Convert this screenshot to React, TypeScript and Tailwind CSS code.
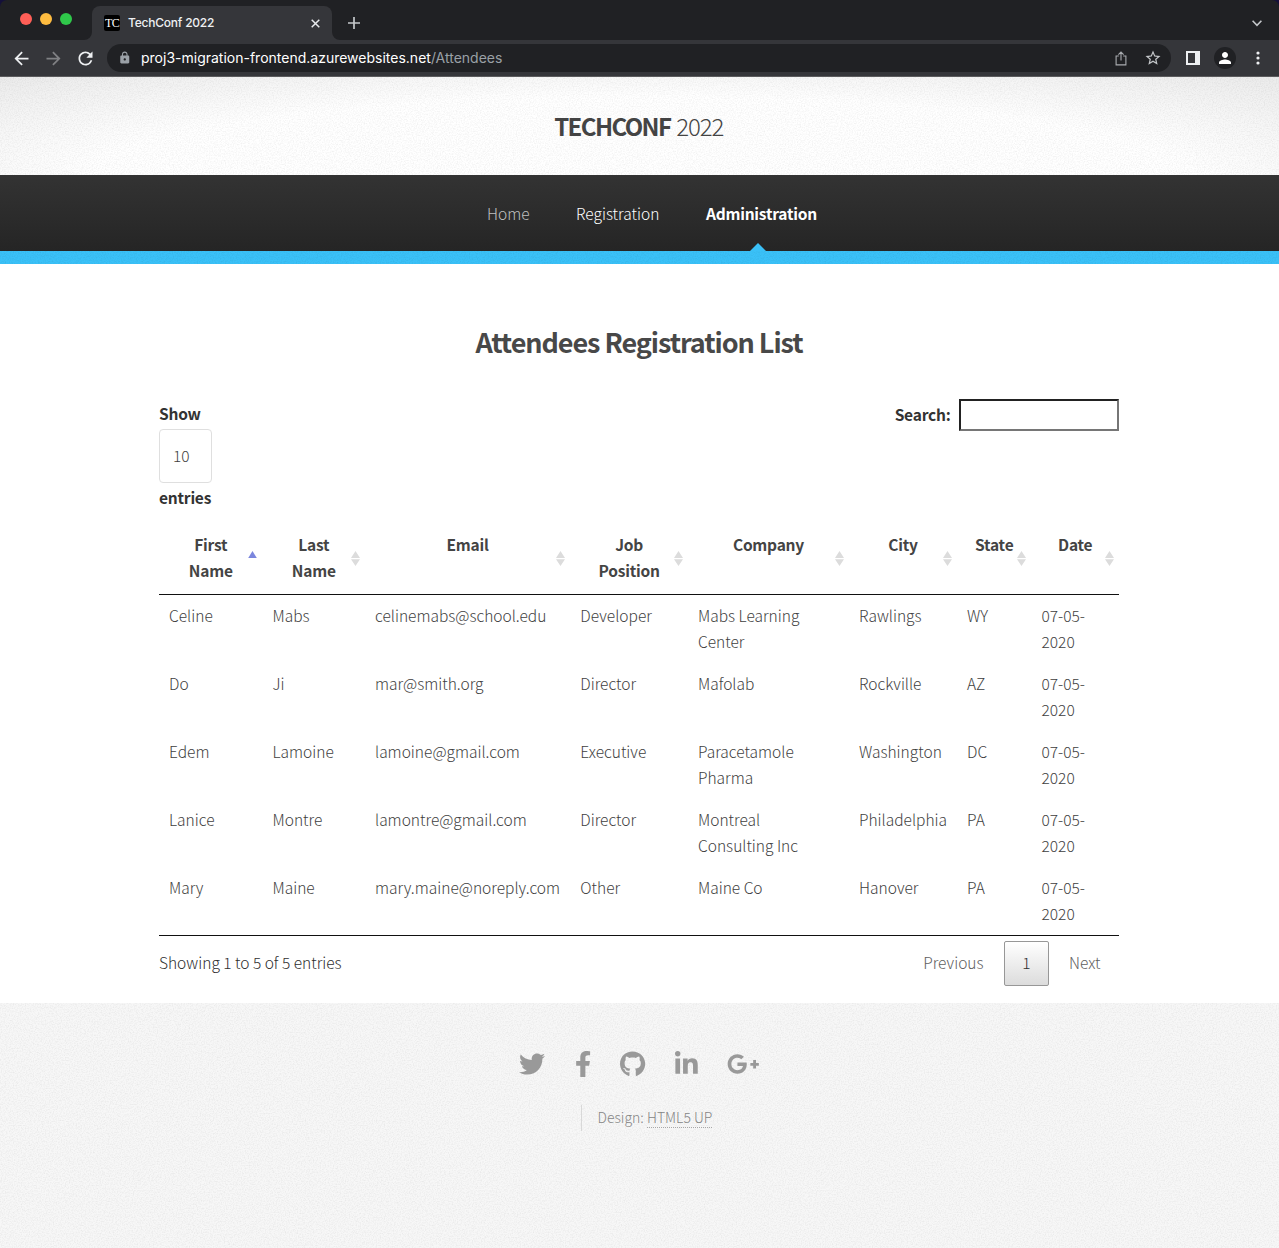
import type { ReactNode } from 'react';
import { FaFacebookF, FaGithub, FaGooglePlusG, FaLinkedinIn, FaTwitter } from 'react-icons/fa';
import { MdArrowBack, MdArrowForward, MdLock, MdPerson, MdRefresh, MdStarBorder } from 'react-icons/md';

function Grain({ id }: { id: string }) {
  return (
    <svg className="pointer-events-none absolute inset-0 h-full w-full" aria-hidden="true">
      <filter id={id} x="0" y="0" width="100%" height="100%">
        <feTurbulence type="fractalNoise" baseFrequency="0.75" numOctaves={2} stitchTiles="stitch" />
        <feColorMatrix values="0 0 0 0 0  0 0 0 0 0  0 0 0 0 0  0.12 0 0 0 -0.047" />
      </filter>
      <rect width="100%" height="100%" filter={`url(#${id})`} />
    </svg>
  );
}

function BrowserBar() {
  return (
    <div className="h-[77px] bg-[#35363a] font-[Inter,sans-serif] font-normal">
      <div className="bg-[#14103a]">
        <div className="flex h-10 items-start rounded-t-[7px] bg-[#202124]">
          <div className="flex gap-2 pt-[13px] pl-5">
            <span className="size-3 rounded-full bg-[#ff5f57]" />
            <span className="size-3 rounded-full bg-[#febc40]" />
            <span className="size-3 rounded-full bg-[#2fc84a]" />
          </div>
          <div className="relative mt-1.5 ml-5 flex h-[34px] w-60 items-center rounded-t-lg bg-[#35363a] pr-3 pl-3">
            <svg className="absolute bottom-0 -left-2 size-2" viewBox="0 0 8 8">
              <path d="M8 0v8H0a8 8 0 0 0 8-8z" fill="#35363a" />
            </svg>
            <svg className="absolute -right-2 bottom-0 size-2" viewBox="0 0 8 8">
              <path d="M0 0v8h8a8 8 0 0 1-8-8z" fill="#35363a" />
            </svg>
            <span className="flex size-4 items-center justify-center rounded-[2px] bg-black font-['Liberation_Serif',serif] text-[12px] leading-none tracking-[-0.6px] text-white">
              TC
            </span>
            <span className="ml-2 flex-1 text-[12px] leading-4 font-medium tracking-[-0.22px] text-[#eef0f2]">TechConf 2022</span>
            <svg className="size-[9px]" viewBox="0 0 9 9" fill="none" stroke="#e8eaed" strokeWidth="1.5">
              <path d="M.7.7l7.6 7.6M8.3.7L.7 8.3" />
            </svg>
          </div>
          <svg className="mt-[17px] ml-4 size-3" viewBox="0 0 12 12" fill="none" stroke="#c4c7ca" strokeWidth="1.7">
            <path d="M6 0v12M0 6h12" />
          </svg>
          <svg className="mt-[20px] mr-[17px] ml-auto h-[7px] w-[10px]" viewBox="0 0 10 7" fill="none" stroke="#c4c7ca" strokeWidth="1.6">
            <path d="M.6.8L5 5.4 9.4.8" />
          </svg>
        </div>
      </div>
      <div className="flex h-[37px] items-center border-b border-[#5b5b5d]">
        <div className="flex w-[107px] gap-[11px] pl-[10.5px]">
          <MdArrowBack className="size-[21px] text-[#eef0f2]" />
          <MdArrowForward className="size-[21px] text-[#808184]" />
          <MdRefresh className="size-[21px] text-[#eef0f2]" />
        </div>
        <div className="flex h-7 w-[1064px] items-center rounded-full bg-[#202124] pr-[9px] pl-[11px]">
          <MdLock className="size-[13.5px] text-[#9aa0a6]" />
          <span className="ml-[9.5px] flex-1 text-[14px] leading-5 text-[#9aa0a6]">
            <span className="text-white">proj3-migration-frontend.azurewebsites.net</span>/Attendees
          </span>
          <svg className="mr-[17px] h-[15px] w-[12px]" viewBox="0 0 12 15" fill="none" stroke="#a9acb0" strokeWidth="1.1">
            <path d="M3.8 5H1.1v8.9h9.8V5H8.2M6 9.6V1.2M3.4 3.7L6 1.1l2.6 2.6" />
          </svg>
          <MdStarBorder className="size-[18px] text-[#c4c7ca]" />
        </div>
        <svg className="ml-[15px] size-[14px]" viewBox="0 0 14 14" fill="#eef0f2">
          <path fillRule="evenodd" d="M0 0h14v14H0zM2 2v10h7V2z" />
        </svg>
        <span className="ml-[14px] flex size-[22px] items-center justify-center rounded-full bg-[#202124]">
          <MdPerson className="size-[18px] text-white" />
        </span>
        <svg className="ml-[19.5px] h-[14px] w-1" viewBox="0 0 4 14" fill="#eef0f2">
          <circle cx="2" cy="2" r="1.6" />
          <circle cx="2" cy="7" r="1.6" />
          <circle cx="2" cy="12" r="1.6" />
        </svg>
      </div>
    </div>
  );
}

function SortIcon({ active }: { active?: boolean }) {
  return (
    <svg className="absolute top-[27px] right-0 h-[19px] w-[19px]" viewBox="0 0 19 19">
      {active ? (
        <path d="M4.2 9h8.6L8.5 2z" fill="#7b86dd" />
      ) : (
        <path d="M5 9h9L9.5 2zM5 10.3h9l-4.5 6.6z" fill="#dcdcdc" />
      )}
    </svg>
  );
}

const columns = [
  { label: 'First Name', width: 'w-[103.5px]' },
  { label: 'Last Name', width: 'w-[102.5px]' },
  { label: 'Email', width: 'w-[205.3px]' },
  { label: 'Job Position', width: 'w-[117.7px]' },
  { label: 'Company', width: 'w-[161px]' },
  { label: 'City', width: 'w-[108px]' },
  { label: 'State', width: 'w-[74.5px]' },
  { label: 'Date', width: 'w-[87.5px]' },
];

const rows = [
  ['Celine', 'Mabs', 'celinemabs@school.edu', 'Developer', 'Mabs Learning Center', 'Rawlings', 'WY', '07-05-2020'],
  ['Do', 'Ji', 'mar@smith.org', 'Director', 'Mafolab', 'Rockville', 'AZ', '07-05-2020'],
  ['Edem', 'Lamoine', 'lamoine@gmail.com', 'Executive', 'Paracetamole Pharma', 'Washington', 'DC', '07-05-2020'],
  ['Lanice', 'Montre', 'lamontre@gmail.com', 'Director', 'Montreal Consulting\u00a0Inc', 'Philadelphia', 'PA', '07-05-2020'],
  ['Mary', 'Maine', 'mary.maine@noreply.com', 'Other', 'Maine Co', 'Hanover', 'PA', '07-05-2020'],
];

function Bold({ children }: { children: ReactNode }) {
  return <span className="font-bold tracking-[-0.22px]">{children}</span>;
}

export default function App() {
  return (
    <div className="flex h-[1248px] w-[1279px] flex-col overflow-hidden bg-white font-['Noto_Sans_CJK_JP',sans-serif] text-[15.53px] leading-[26px] font-light text-[#3e3e3e]">
      <BrowserBar />

      <header className="relative flex h-[98px] items-center justify-center bg-[radial-gradient(ellipse_85%_160%_at_50%_100%,#fff_50%,#e3e3e3_100%)]">
        <Grain id="grain-header" />
        <h1 className="relative -mt-px -ml-[1.5px] flex gap-[6px] text-[24px] leading-8 text-[#444]">
          <span className="font-bold tracking-[-1.6px]">TECHCONF</span>
          <span className="tracking-[-1.1px]">2022</span>
        </h1>
      </header>

      <nav className="flex h-[76px] justify-center gap-[46.5px] bg-linear-to-b from-[#333] to-[#252525] pt-[25px] pl-[25px] text-white">
        <a className="text-[#c0c0c0]">Home</a>
        <a>Registration</a>
        <a className="relative">
          <Bold>Administration</Bold>
          <svg className="absolute bottom-0 left-11 h-2 w-4" viewBox="0 0 16 8">
            <path d="M0 8L8 0l8 8z" fill="#3ac0f7" />
          </svg>
        </a>
      </nav>
      <div className="relative h-[13px] bg-[#3ac1f8]">
        <Grain id="grain-band" />
      </div>

      <main className="ml-[159px] h-[739px] w-[960px]">
        <h2 className="pt-[58px] text-center text-[27px] leading-10 font-bold tracking-[-1.06px] text-[#484848]">
          Attendees Registration List
        </h2>
        <div className="mt-[37px] flex h-[123px] justify-between text-[#333]">
          <div className="pt-px">
            <div><Bold>Show</Bold></div>
            <div className="mt-[3px] flex h-[54px] w-[53px] items-center rounded border border-[#dfdfdf] bg-white pb-0.5 pl-[13px] text-[#3e3e3e]">10</div>
            <div className="mt-px"><Bold>entries</Bold></div>
          </div>
          <label className="flex h-8 items-center gap-[8.5px]">
            <span className="pb-0.5"><Bold>Search:</Bold></span>
            <input className="h-8 w-40 border-2 border-t-[#222] border-r-[#767676] border-b-[#767676] border-l-[#222] bg-white outline-none" />
          </label>
        </div>

        <table className="w-[960px] table-fixed border-separate border-spacing-0">
          <thead>
            <tr>
              {columns.map((c, i) => (
                <th key={c.label} className={`${c.width} relative h-[73px] border-b border-[#111] px-[18px] pt-[9px] pb-[11px] text-center align-top text-[#444]`}>
                  <Bold>{c.label}</Bold>
                  <SortIcon active={i === 0} />
                </th>
              ))}
            </tr>
          </thead>
          <tbody>
            {rows.map((row) => (
              <tr key={row[0]}>
                {row.map((cell, i) => (
                  <td key={i} className="h-[68px] px-2.5 pt-[7px] pb-[9px] align-top">{cell}</td>
                ))}
              </tr>
            ))}
          </tbody>
        </table>
        <div className="flex justify-between border-t border-[#111]">
          <span className="pt-[13px] text-[#2e2e2e]">Showing 1 to 5 of 5 entries</span>
          <div className="flex items-center pt-[5px] pr-[18.5px] text-[#5e5e5e]">
            <span className="pb-[3px]">Previous</span>
            <span className="mr-5 ml-[20.5px] flex h-[45px] w-[45px] items-center justify-center rounded-[2px] border border-[#979797] bg-linear-to-b from-white to-[#dcdcdc] pb-[3px] text-[#2e2e2e]">1</span>
            <span className="pb-[3px]">Next</span>
          </div>
        </div>
      </main>

      <footer className="relative flex h-[245px] flex-col items-center bg-[#f7f7f7]">
        <Grain id="grain-footer" />
        <div className="relative mt-12 flex h-[26px] items-center gap-[29.4px] text-[#999]">
          <FaTwitter className="h-[26px] w-[26px]" />
          <FaFacebookF className="h-[26px] w-[16.25px]" />
          <FaGithub className="h-[26px] w-[25.2px]" />
          <FaLinkedinIn className="h-[26px] w-[22.75px]" />
          <FaGooglePlusG className="h-[26px] w-[32.5px]" />
        </div>
        <div className="relative mt-7 ml-[14px] h-[26px] border-l border-[#d8d8d8] pl-4 text-[14px] leading-[24px] text-[#858585]">
          Design: <a className="border-b border-dotted border-[#a8a8a8] leading-none">HTML5 UP</a>
        </div>
      </footer>
    </div>
  );
}
